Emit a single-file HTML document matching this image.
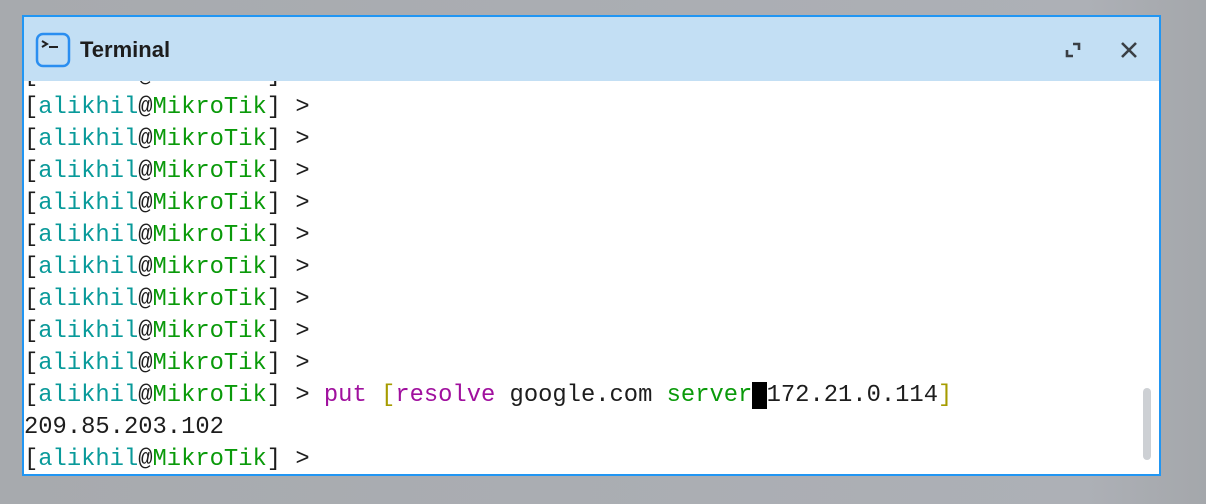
<!DOCTYPE html>
<html><head><style>
body{margin:0;width:1206px;height:504px;background:linear-gradient(90deg,#a7aaae,#adb0b6 90%,#a4a7ab);overflow:hidden;position:relative;font-family:"Liberation Sans",sans-serif}
.win{position:absolute;left:22px;top:15px;width:1135px;height:457px;border:2px solid #2196f3;background:#fff}
.title{position:absolute;left:0;top:0;right:0;height:64px;background:#c3dff4;z-index:2}
.title .t{position:absolute;left:56px;top:20px;font-size:22px;font-weight:bold;color:#1d1d1d}
.body{position:absolute;left:0;top:64px;right:0;bottom:0;overflow:hidden}
.lines{position:absolute;left:0;top:-21px;font-family:"Liberation Mono",monospace;font-size:23.8px;line-height:32px;color:#1d1d1d;white-space:pre}
.c{color:#099a9a}.g{color:#0a9a0a}.p{color:#a0109e}.y{color:#a69c00}
.cur{background:#000;color:#000}
.sb{position:absolute;right:8px;top:371px;width:8px;height:72px;border-radius:4px;background:#cdd0d4;z-index:3}
</style></head><body>
<div class="win">
<div class="title">
<svg style="position:absolute;left:11px;top:15px" width="36" height="36" viewBox="0 0 36 36"><rect x="2" y="2" width="32" height="32" rx="6" fill="none" stroke="#2a8ef0" stroke-width="2.5"/><path d="M7 9l5 3-5 3" fill="none" stroke="#222" stroke-width="2"/><path d="M14 15h9" stroke="#222" stroke-width="2"/></svg>
<span class="t">Terminal</span>
<svg style="position:absolute;left:1041px;top:25px" width="16" height="16" viewBox="0 0 16 16"><path d="M2 8v6h6M8 2h6v6" fill="none" stroke="#3a3f44" stroke-width="2.6"/></svg>
<svg style="position:absolute;left:1096px;top:24px" width="18" height="18" viewBox="0 0 18 18"><path d="M2 2l14 14M16 2L2 16" stroke="#3a3f44" stroke-width="2.6"/></svg>
</div>
<div class="body"><div class="lines">[<span class="c">alikhil</span>@<span class="g">MikroTik</span>] &gt;
[<span class="c">alikhil</span>@<span class="g">MikroTik</span>] &gt;
[<span class="c">alikhil</span>@<span class="g">MikroTik</span>] &gt;
[<span class="c">alikhil</span>@<span class="g">MikroTik</span>] &gt;
[<span class="c">alikhil</span>@<span class="g">MikroTik</span>] &gt;
[<span class="c">alikhil</span>@<span class="g">MikroTik</span>] &gt;
[<span class="c">alikhil</span>@<span class="g">MikroTik</span>] &gt;
[<span class="c">alikhil</span>@<span class="g">MikroTik</span>] &gt;
[<span class="c">alikhil</span>@<span class="g">MikroTik</span>] &gt;
[<span class="c">alikhil</span>@<span class="g">MikroTik</span>] &gt;
[<span class="c">alikhil</span>@<span class="g">MikroTik</span>] &gt; <span class="p">put</span> <span class="y">[</span><span class="p">resolve</span> google.com <span class="g">server</span><span class="cur"> </span>172.21.0.114<span class="y">]</span>
209.85.203.102
[<span class="c">alikhil</span>@<span class="g">MikroTik</span>] &gt;</div></div>
<div class="sb"></div>
</div>
</body></html>
